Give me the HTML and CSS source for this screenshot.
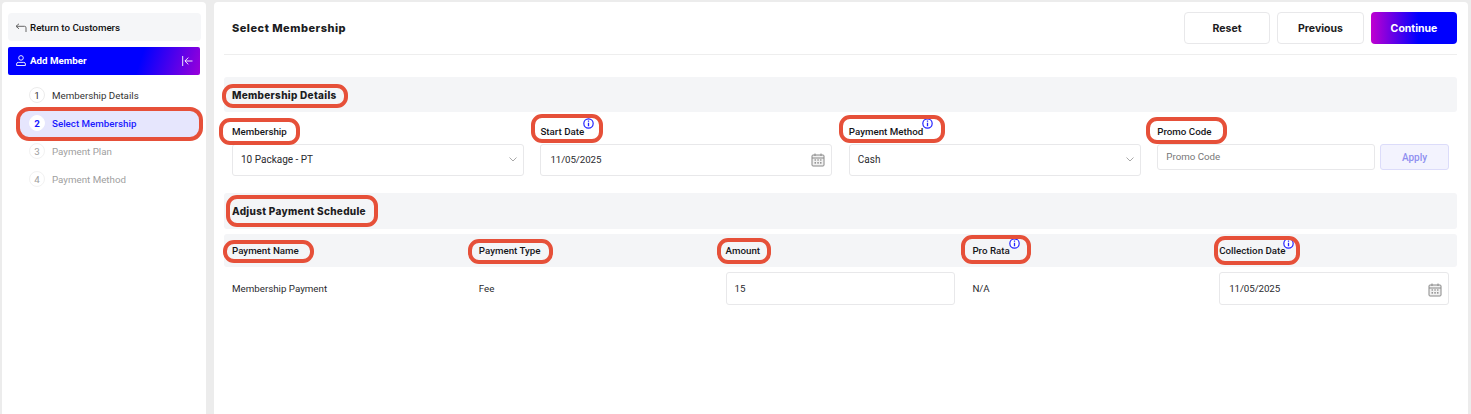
FILE: index.html
```html
<!DOCTYPE html>
<html lang="en">
<head>
<meta charset="utf-8">
<title>Select Membership</title>
<link rel="stylesheet" href="styles.css">
</head>
<body>
<div class="page">
  <aside class="sidebar">
    <div class="back">
      <svg class="back-ico" viewBox="0 0 12 9" width="12" height="9"><path d="M4 .8 1 3.3 4 5.8M1 3.3h8.5A1.5 1.5 0 0 1 11 4.8V9" fill="none" stroke="#666" stroke-width="1"/></svg>
      <span>Return to Customers</span>
    </div>
    <div class="add">
      <svg viewBox="0 0 10 11" width="10" height="11"><circle cx="5" cy="2.9" r="2.3" fill="none" stroke="#fff" stroke-width=".9"/><path d="M.6 10.500V9A1.600 1.600 0 0 1 2.200 7.400h5.600A1.600 1.600 0 0 1 9.400 9v1.500z" fill="none" stroke="#fff" stroke-width=".9"/></svg>
      <span class="add-text">Add Member</span>
      <svg viewBox="0 0 11 10" width="11" height="10"><path d="M.7 0v10M10.500 5H3M6.300 1.600 2.900 5l3.400 3.400" fill="none" stroke="#fff" stroke-width=".9"/></svg>
    </div>
    <ol class="steps">
      <li class="step done"><span class="num">1</span>Membership Details</li>
      <li class="step current"><span class="num">2</span>Select Membership</li>
      <li class="step todo"><span class="num">3</span>Payment Plan</li>
      <li class="step todo"><span class="num">4</span>Payment Method</li>
    </ol>
  </aside>
  <main class="main">
    <header class="top">
      <h1>Select Membership</h1>
      <div class="actions">
        <button class="btn">Reset</button>
        <button class="btn wide">Previous</button>
        <button class="btn primary">Continue</button>
      </div>
    </header>
    <h2 class="band first">Membership Details</h2>
    <div class="form">
      <div class="field">
        <label>Membership</label>
        <div class="control"><span class="value">10 Package - PT</span>
          <svg class="chev" viewBox="0 0 8 5" width="8" height="5"><path d="M.5.500 4 4 7.500.500" fill="none" stroke="#a8a8a8"/></svg>
        </div>
      </div>
      <div class="field">
        <label>Start Date<svg class="info" viewBox="0 0 12 12" width="11" height="11"><circle cx="6" cy="6" r="5.100" fill="#fff" stroke="#2222ff" stroke-width="1.300"/><path d="M6 5.200v3.800M6 2.800v1.300" stroke="#2222ff" stroke-width="1.400"/></svg></label>
        <div class="control"><span class="date">11/05/2025</span>
          <svg class="cal" viewBox="0 0 14 14" width="14" height="14"><rect x="1" y="2" width="12" height="11" rx="1" fill="#f1f1f1" stroke="#888"/><path d="M1 5h12M4 .5v2.500M10 .5v2.500" stroke="#888"/><path d="M3.500 7h1.500M6.300 7h1.500M9 7h1.500M3.500 9.800h1.500M6.300 9.800h1.500M9 9.800h1.500" stroke="#777" stroke-width="1.200"/></svg>
        </div>
      </div>
      <div class="field">
        <label>Payment Method<svg class="info" viewBox="0 0 12 12" width="11" height="11"><circle cx="6" cy="6" r="5.100" fill="#fff" stroke="#2222ff" stroke-width="1.300"/><path d="M6 5.200v3.800M6 2.800v1.300" stroke="#2222ff" stroke-width="1.400"/></svg></label>
        <div class="control"><span class="value">Cash</span>
          <svg class="chev" viewBox="0 0 8 5" width="8" height="5"><path d="M.5.500 4 4 7.500.500" fill="none" stroke="#a8a8a8"/></svg>
        </div>
      </div>
      <div class="field">
        <label>Promo Code</label>
        <div class="promo">
          <div class="control small"><span class="placeholder">Promo Code</span></div>
          <button class="apply">Apply</button>
        </div>
      </div>
    </div>
    <h2 class="band second">Adjust Payment Schedule</h2>
    <div class="thead">
      <span>Payment Name</span>
      <span>Payment Type</span>
      <span>Amount</span>
      <span>Pro Rata<svg class="info" viewBox="0 0 12 12" width="11" height="11"><circle cx="6" cy="6" r="5.100" fill="#fff" stroke="#2222ff" stroke-width="1.300"/><path d="M6 5.200v3.800M6 2.800v1.300" stroke="#2222ff" stroke-width="1.400"/></svg></span>
      <span>Collection Date<svg class="info tight" viewBox="0 0 12 12" width="11" height="11"><circle cx="6" cy="6" r="5.100" fill="#fff" stroke="#2222ff" stroke-width="1.300"/><path d="M6 5.200v3.800M6 2.800v1.300" stroke="#2222ff" stroke-width="1.400"/></svg></span>
    </div>
    <div class="trow">
      <span>Membership Payment</span>
      <span>Fee</span>
      <div class="control row-ctl"><span>15</span></div>
      <span>N/A</span>
      <div class="control row-ctl"><span class="date">11/05/2025</span>
        <svg class="cal" viewBox="0 0 14 14" width="14" height="14"><rect x="1" y="2" width="12" height="11" rx="1" fill="#f1f1f1" stroke="#888"/><path d="M1 5h12M4 .5v2.500M10 .5v2.500" stroke="#888"/><path d="M3.500 7h1.500M6.300 7h1.500M9 7h1.500M3.500 9.800h1.500M6.300 9.800h1.500M9 9.800h1.500" stroke="#777" stroke-width="1.200"/></svg>
      </div>
    </div>
  </main>
</div>
<div class="mark m-step"></div>
<div class="mark m-details"></div>
<div class="mark m-membership"></div>
<div class="mark m-start"></div>
<div class="mark m-method"></div>
<div class="mark m-promo"></div>
<div class="mark m-adjust"></div>
<div class="mark m-name"></div>
<div class="mark m-type"></div>
<div class="mark m-amount"></div>
<div class="mark m-prorata"></div>
<div class="mark m-collection"></div>
</body>
</html>
```
FILE: styles.css
```css
* { box-sizing: border-box; }
html, body { margin: 0; height: 414px; overflow: hidden; }
body {
  position: relative;
  background: #ececec;
  font-family: Roboto, "Liberation Sans", sans-serif;
  font-size: 9.75px;
  color: #2a2a2e;
}
.page { display: flex; gap: 8px; height: 414px; padding: 2px 3px 0 2px; }
.sidebar {
  width: 204px;
  flex: none;
  background: #fff;
  border-radius: 4px 4px 0 0;
  padding: 11px 5px 0 6px;
}
.back {
  display: flex;
  align-items: center;
  gap: 3px;
  height: 28px;
  padding-left: 7px;
  background: #f5f6f8;
  border-radius: 4px;
  font-weight: 500;
  color: #111;
}
.add {
  display: flex;
  align-items: center;
  gap: 4px;
  height: 28px;
  width: 192px;
  margin-top: 6px;
  padding: 0 7px 1px 8px;
  border-radius: 2px;
  background: linear-gradient(108deg, #0000ff 0%, #0000ff 68%, #c000d0 108%);
  color: #fff;
  font-weight: 700;
}
.add-text { flex: 1; }
.steps { list-style: none; margin: 6px 0 0; padding: 0 0 0 12px; }
.step {
  display: flex;
  align-items: center;
  gap: 7px;
  height: 28px;
  padding-left: 9px;
  color: #333;
}
.num {
  width: 16px;
  height: 16px;
  border-radius: 50%;
  border: 1px solid #ececec;
  background: #fff;
  display: flex;
  align-items: center;
  justify-content: center;
}
.current { background: #e6e6fd; color: #1a1aff; font-weight: 500; border-radius: 4px; }
.current .num { border-color: #fff; font-weight: 700; }
.todo { color: #a0a0a0; }
.todo .num { border-color: #f2f2f2; }
.main { flex: 1; min-width: 0; background: #fff; border-radius: 4px 4px 0 0; padding: 0 11px 0 10px; }
.top {
  display: flex;
  align-items: center;
  justify-content: space-between;
  height: 53px;
  padding: 0 0 0 8px;
  border-bottom: 1px solid #eeeeee;
}
h1, h2 {
  margin: 0;
  font-family: Inter, "Liberation Sans", sans-serif;
  font-weight: 800;
  color: #1c1c22;
}
h1 { font-size: 11px; letter-spacing: 0.5px; }
h2 { font-size: 10px; letter-spacing: 0.3px; }
.actions { display: flex; gap: 7px; }
.btn {
  width: 86px;
  height: 32px;
  padding: 0;
  background: #fff;
  border: 1px solid #e8e8ea;
  border-radius: 4px;
  font-family: Inter, "Liberation Sans", sans-serif;
  font-size: 10.5px;
  font-weight: 700;
  color: #1c1c22;
}
.btn.wide { width: 87px; }
.btn.primary {
  border: 0;
  color: #fff;
  background: linear-gradient(90deg, #c000d0 0%, #0000ff 55%);
}
.band {
  display: flex;
  align-items: center;
  padding-left: 8px;
  background: #f4f5f7;
  border-radius: 3px;
}
.band.first { height: 35px; margin-top: 22px; }
.band.second { height: 36px; margin-top: 17px; }
.form {
  display: grid;
  grid-template-columns: repeat(4, 1fr);
  gap: 16.7px;
  padding: 0 8px;
  height: 64px;
}
label, .thead span { font-weight: 500; color: #16161a; }
label { display: block; height: 32px; padding-top: 13px; line-height: 13px; }
.info { position: absolute; margin-left: -1px; margin-top: -7px; }
.info.tight { margin-left: -3px; }
.control {
  display: flex;
  align-items: center;
  justify-content: space-between;
  height: 32px;
  padding: 0 6px 2px 8px;
  border: 1px solid #e8e8ea;
  border-radius: 3px;
  background: #fff;
}
.value { font-size: 10px; }
.date { padding-left: 1px; letter-spacing: -0.1px; }
.cal { margin-top: 2px; }
.promo { display: flex; gap: 5px; }
.control.small { flex: 1; height: 26px; }
.placeholder { color: #777; }
.apply {
  width: 69px;
  height: 26px;
  padding: 0;
  background: #f3f3fe;
  border: 1px solid #dcdcfa;
  border-radius: 3px;
  font-family: inherit;
  font-size: 10px;
  font-weight: 500;
  color: #8f8ff0;
}
.thead, .trow {
  display: grid;
  grid-template-columns: repeat(5, 1fr);
  column-gap: 17px;
  align-items: center;
  padding: 0 8px;
}
.thead { height: 33px; margin-top: 5px; background: #f4f5f7; border-radius: 3px; }
.trow { height: 33px; margin-top: 5px; }
.row-ctl { height: 33px; padding-bottom: 0; }
.mark {
  position: absolute;
  border: 4px solid #e65039;
  border-radius: 11px;
}
.m-step { left: 16px; top: 107px; width: 187px; height: 34px; border-radius: 13px; }
.m-details { left: 222px; top: 84px; width: 126px; height: 24px; }
.m-membership { left: 219px; top: 118px; width: 81px; height: 27px; }
.m-start { left: 531px; top: 114px; width: 72px; height: 29px; }
.m-method { left: 839px; top: 115px; width: 106px; height: 28px; }
.m-promo { left: 1146px; top: 117px; width: 81px; height: 27px; }
.m-adjust { left: 226px; top: 195px; width: 152px; height: 32px; }
.m-name { left: 223px; top: 240px; width: 91px; height: 23px; }
.m-type { left: 468px; top: 239px; width: 85px; height: 25px; }
.m-amount { left: 717px; top: 238px; width: 54px; height: 26px; }
.m-prorata { left: 961px; top: 235px; width: 70px; height: 29px; }
.m-collection { left: 1214px; top: 236px; width: 86px; height: 29px; }
```
